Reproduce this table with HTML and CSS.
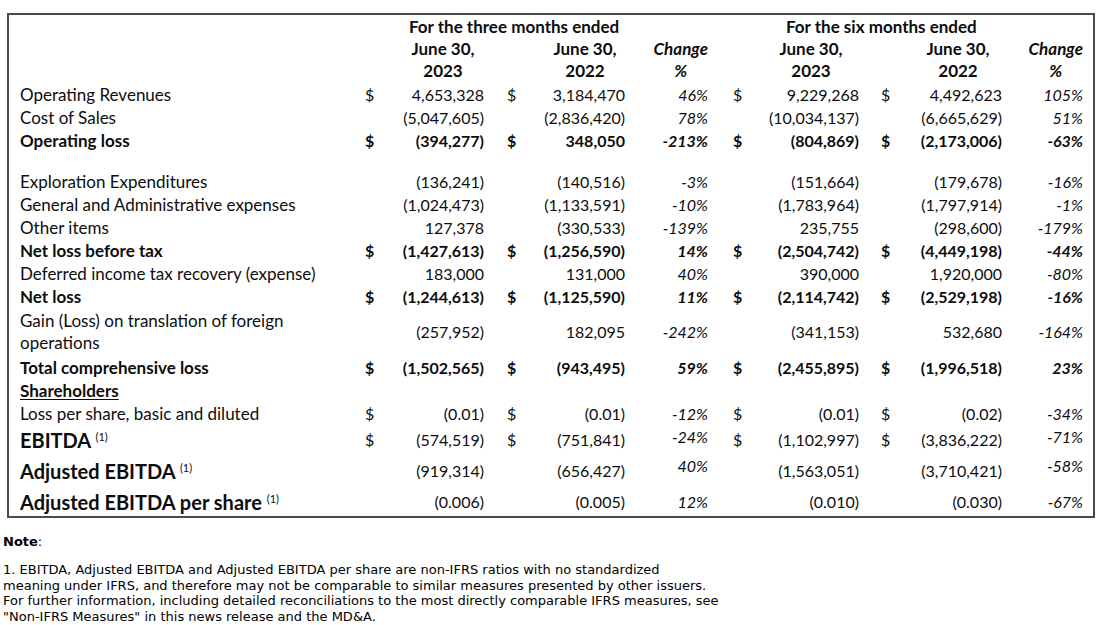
FILE: index.html
```html
<!DOCTYPE html>
<html lang="en">
<head>
<meta charset="utf-8">
<title>Financial Highlights</title>
<link rel="stylesheet" href="styles.css">
</head>
<body>
<div class="box">
<table class="fin">
<colgroup>
<col class="w-label"><col class="w-d1"><col class="w-v1"><col class="w-d2"><col class="w-v2"><col class="w-c1"><col class="w-d3"><col class="w-v3"><col class="w-d4"><col class="w-v4"><col class="w-c2">
</colgroup>
<thead>
<tr class="h1">
<td></td>
<td colspan="5" class="p3">For the three months ended</td>
<td colspan="5" class="p6">For the six months ended</td>
</tr>
<tr class="h2">
<td></td>
<td colspan="3" class="hd-a">June 30,<br>2023</td>
<td class="hd-b">June 30,<br>2022</td>
<td class="hd-c"><span class="chg">Change<br>%</span></td>
<td colspan="2" class="hd-d">June 30,<br>2023</td>
<td colspan="2" class="hd-e">June 30,<br>2022</td>
<td class="hd-f"><span class="chg">Change<br>%</span></td>
</tr>
</thead>
<tbody>
<tr class="r"><td>Operating Revenues</td><td>$</td><td>4,653,328</td><td>$</td><td>3,184,470</td><td>46%</td><td>$</td><td>9,229,268</td><td>$</td><td>4,492,623</td><td>105%</td></tr>
<tr class="r"><td>Cost of Sales</td><td></td><td>(5,047,605)</td><td></td><td>(2,836,420)</td><td>78%</td><td></td><td>(10,034,137)</td><td></td><td>(6,665,629)</td><td>51%</td></tr>
<tr class="r b"><td>Operating loss</td><td>$</td><td>(394,277)</td><td>$</td><td>348,050</td><td>-213%</td><td>$</td><td>(804,869)</td><td>$</td><td>(2,173,006)</td><td>-63%</td></tr>
<tr class="r gap"><td></td><td></td><td></td><td></td><td></td><td></td><td></td><td></td><td></td><td></td><td></td></tr>
<tr class="r"><td>Exploration Expenditures</td><td></td><td>(136,241)</td><td></td><td>(140,516)</td><td>-3%</td><td></td><td>(151,664)</td><td></td><td>(179,678)</td><td>-16%</td></tr>
<tr class="r"><td>General and Administrative expenses</td><td></td><td>(1,024,473)</td><td></td><td>(1,133,591)</td><td>-10%</td><td></td><td>(1,783,964)</td><td></td><td>(1,797,914)</td><td>-1%</td></tr>
<tr class="r"><td>Other items</td><td></td><td>127,378</td><td></td><td>(330,533)</td><td>-139%</td><td></td><td>235,755</td><td></td><td>(298,600)</td><td>-179%</td></tr>
<tr class="r b"><td>Net loss before tax</td><td>$</td><td>(1,427,613)</td><td>$</td><td>(1,256,590)</td><td>14%</td><td>$</td><td>(2,504,742)</td><td>$</td><td>(4,449,198)</td><td>-44%</td></tr>
<tr class="r"><td>Deferred income tax recovery (expense)</td><td></td><td>183,000</td><td></td><td>131,000</td><td>40%</td><td></td><td>390,000</td><td></td><td>1,920,000</td><td>-80%</td></tr>
<tr class="r b"><td>Net loss</td><td>$</td><td>(1,244,613)</td><td>$</td><td>(1,125,590)</td><td>11%</td><td>$</td><td>(2,114,742)</td><td>$</td><td>(2,529,198)</td><td>-16%</td></tr>
<tr class="r two"><td class="wrap">Gain (Loss) on translation of foreign operations</td><td></td><td>(257,952)</td><td></td><td>182,095</td><td>-242%</td><td></td><td>(341,153)</td><td></td><td>532,680</td><td>-164%</td></tr>
<tr class="r b"><td>Total comprehensive loss</td><td>$</td><td>(1,502,565)</td><td>$</td><td>(943,495)</td><td>59%</td><td>$</td><td>(2,455,895)</td><td>$</td><td>(1,996,518)</td><td>23%</td></tr>
<tr class="r"><td class="sh">Shareholders</td><td></td><td></td><td></td><td></td><td></td><td></td><td></td><td></td><td></td><td></td></tr>
<tr class="r"><td>Loss per share, basic and diluted</td><td>$</td><td>(0.01)</td><td>$</td><td>(0.01)</td><td>-12%</td><td>$</td><td>(0.01)</td><td>$</td><td>(0.02)</td><td>-34%</td></tr>
<tr class="r big e1"><td>EBITDA <sup>(1)</sup></td><td>$</td><td>(574,519)</td><td>$</td><td>(751,841)</td><td>-24%</td><td>$</td><td>(1,102,997)</td><td>$</td><td>(3,836,222)</td><td>-71%</td></tr>
<tr class="r big e2"><td>Adjusted EBITDA <sup>(1)</sup></td><td></td><td>(919,314)</td><td></td><td>(656,427)</td><td>40%</td><td></td><td>(1,563,051)</td><td></td><td>(3,710,421)</td><td>-58%</td></tr>
<tr class="r big e3"><td>Adjusted EBITDA per share <sup>(1)</sup></td><td></td><td>(0.006)</td><td></td><td>(0.005)</td><td>12%</td><td></td><td>(0.010)</td><td></td><td>(0.030)</td><td>-67%</td></tr>
</tbody>
</table>
</div>

<div class="notes">
<p class="note-title"><b>Note</b>:</p>
<p class="note-text">1. EBITDA, Adjusted EBITDA and Adjusted EBITDA per share are non-IFRS ratios with no standardized<br>meaning under IFRS, and therefore may not be comparable to similar measures presented by other issuers.<br>For further information, including detailed reconciliations to the most directly comparable IFRS measures, see<br>"Non-IFRS Measures" in this news release and the MD&amp;A.</p>
</div>
</body>
</html>
```

FILE: styles.css
```css
html, body {
  margin: 0;
  padding: 0;
  background: #ffffff;
  color: #000000;
}

.box {
  margin: 13px 0 0 7px;
  width: 1084px;
  border: 2px solid #4a4a4a;
}

.fin {
  width: 1084px;
  table-layout: fixed;
  border-collapse: collapse;
  border-spacing: 0;
  font-family: Lato, "Liberation Sans", sans-serif;
  font-size: 16px;
  color: #0d0d0d;
}

.w-label { width: 353px; }
.w-d1 { width: 20px; }
.w-v1 { width: 106px; }
.w-d2 { width: 39px; }
.w-v2 { width: 102px; }
.w-c1 { width: 83px; }
.w-d3 { width: 40px; }
.w-v3 { width: 111px; }
.w-d4 { width: 36px; }
.w-v4 { width: 107px; }
.w-c2 { width: 87px; }

.fin td {
  padding: 0;
  white-space: nowrap;
  vertical-align: middle;
}

/* header */
.h1 td {
  height: 22px;
  line-height: 22px;
  font-weight: 700;
  font-size: 17px;
  padding-top: 1px;
}
.h1 .p3 { padding-left: 47px; }
.h1 .p6 { padding-left: 74px; }

.h2 td {
  line-height: 22px;
  font-weight: 700;
  font-size: 17px;
  text-align: center;
  vertical-align: top;
  padding-bottom: 1px;
}
.h2 .hd-a { padding-right: 3px; }
.h2 .hd-b { padding-left: 14px; }
.h2 .hd-c { text-align: right; padding-right: 4px; }
.h2 .hd-d { padding-left: 47px; }
.h2 .hd-e { padding-left: 47px; }
.h2 .hd-f { text-align: right; padding-right: 10px; }
.chg {
  display: inline-block;
  text-align: center;
  font-style: italic;
  font-size: 17px;
}

/* body rows */
.r td {
  height: 23px;
  line-height: 20px;
}
.r td:nth-child(1) { padding-left: 11px; font-size: 17px; }
.r td:nth-child(2) { padding-left: 3px; }
.r td:nth-child(3) { text-align: right; padding-right: 4px; }
.r td:nth-child(4) { padding-left: 19px; }
.r td:nth-child(5) { text-align: right; padding-right: 4px; }
.r td:nth-child(6) { text-align: right; padding-right: 4px; font-style: italic; }
.r td:nth-child(7) { padding-left: 21px; }
.r td:nth-child(8) { text-align: right; padding-right: 4px; }
.r td:nth-child(9) { padding-left: 18px; }
.r td:nth-child(10) { text-align: right; padding-right: 4px; }
.r td:nth-child(11) { text-align: right; padding-right: 10px; font-style: italic; }

.r.b td { font-weight: 700; }

.r.gap td { height: 18px; }

.r.two td { height: 48px; }
.r.two td.wrap {
  white-space: normal;
  line-height: 22px;
  padding-right: 40px;
}

.sh {
  font-weight: 700;
  text-decoration: underline;
  text-underline-offset: 2px;
}

.r.big td:nth-child(1) {
  font-weight: 700;
  font-size: 20px;
}
.r.big sup {
  font-size: 11px;
  font-weight: 400;
  vertical-align: 7px;
  line-height: 0;
}
.r.e1 td { height: 27px; }
.r.e2 td { height: 32px; }
.r.e3 td { height: 28px; }
.r.big td:nth-child(6),
.r.big td:nth-child(11) { vertical-align: top; padding-top: 2px; }
.r.e3 td:nth-child(6),
.r.e3 td:nth-child(11) { vertical-align: middle; padding-top: 0; }

/* notes */
.notes {
  font-family: "DejaVu Sans", Verdana, sans-serif;
  font-size: 13px;
  color: #000;
  padding-left: 3px;
}
.note-title {
  margin: 16px 0 0 0;
  line-height: 16px;
}
.note-text {
  margin: 12px 0 0 0;
  line-height: 15.6px;
}
```
